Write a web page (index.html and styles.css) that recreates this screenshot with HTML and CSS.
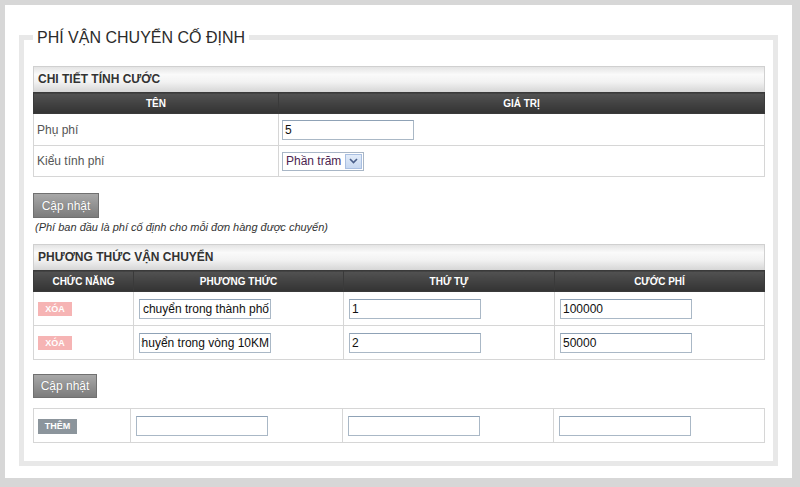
FILE: index.html
```html
<!DOCTYPE html>
<html lang="vi">
<head>
<meta charset="utf-8">
<title>Phí vận chuyển cố định</title>
<link rel="stylesheet" href="styles.css">
</head>
<body>
<div class="page">
  <fieldset class="box">
    <legend class="box-title">PHÍ VẬN CHUYỂN CỐ ĐỊNH</legend>

    <div class="panel">
      <div class="panel-title">CHI TIẾT TÍNH CƯỚC</div>
      <table class="grid grid-fee">
        <colgroup><col class="w-name"><col></colgroup>
        <thead>
          <tr><th>TÊN</th><th>GIÁ TRỊ</th></tr>
        </thead>
        <tbody>
          <tr class="row-a"><td class="label">Phụ phí</td><td><input class="field" type="text" value="5"></td></tr>
          <tr class="row-b"><td class="label">Kiểu tính phí</td><td>
            <div class="select"><span class="select-text">Phần trăm</span><span class="select-btn"><svg width="9" height="6" viewBox="0 0 9 6"><path d="M1 1 L4.5 4.5 L8 1" fill="none" stroke="#4a5f8a" stroke-width="1.6"/></svg></span></div>
          </td></tr>
        </tbody>
      </table>
    </div>

    <button class="btn btn-first" type="button">Cập nhật</button>
    <p class="note">(Phí ban đầu là phí cố định cho mỗi đơn hàng được chuyển)</p>

    <div class="panel">
      <div class="panel-title">PHƯƠNG THỨC VẬN CHUYỂN</div>
      <table class="grid grid-methods">
        <colgroup><col class="w-act"><col class="w-m"><col class="w-o"><col></colgroup>
        <thead>
          <tr><th>CHỨC NĂNG</th><th>PHƯƠNG THỨC</th><th>THỨ TỰ</th><th>CƯỚC PHÍ</th></tr>
        </thead>
        <tbody>
          <tr class="row-m"><td class="cell-tag"><span class="tag tag-del">XÓA</span></td><td><input class="field field-end" type="text" value="Vận chuyển trong thành phố"></td><td><input class="field" type="text" value="1"></td><td><input class="field" type="text" value="100000"></td></tr>
          <tr class="row-m"><td class="cell-tag"><span class="tag tag-del">XÓA</span></td><td><input class="field field-end" type="text" value="Vận chuyển trong vòng 10KM"></td><td><input class="field" type="text" value="2"></td><td><input class="field" type="text" value="50000"></td></tr>
        </tbody>
      </table>
    </div>

    <button class="btn btn-second" type="button">Cập nhật</button>

    <table class="grid grid-add">
      <colgroup><col class="w-act2"><col class="w-m2"><col class="w-o2"><col></colgroup>
      <tbody>
        <tr class="row-m"><td class="cell-tag"><span class="tag tag-add">THÊM</span></td><td><input class="field" type="text" value=""></td><td><input class="field" type="text" value=""></td><td><input class="field" type="text" value=""></td></tr>
      </tbody>
    </table>
  </fieldset>
</div>
</body>
</html>
```

FILE: styles.css
```css
* { box-sizing: border-box; }

html, body {
  margin: 0;
  padding: 0;
  background: #d7d7d7;
  font-family: "Liberation Sans", Arial, sans-serif;
  color: #333;
}

.page {
  background: #fff;
  margin: 5px 8px 0 5px;
  padding: 23px 14px 13px 14px;
  height: 473px;
}

.box {
  margin: 0;
  border: 5px solid #e8e8e8;
  padding: 19px 8px 18px 9px;
  min-width: 0;
}

.box-title {
  font-size: 16px;
  line-height: 19px;
  font-weight: normal;
  color: #2b2b2b;
  padding: 0 4px;
  margin: 0;
}

.panel-title {
  height: 26px;
  border: 1px solid #d0d0d0;
  border-bottom: none;
  background: linear-gradient(#e4e4e4 0%, #fafafa 30%, #f2f2f2 60%, #d6d6d6 100%);
  font-size: 12px;
  font-weight: bold;
  line-height: 25px;
  padding-left: 4px;
  color: #333;
}

.grid {
  width: 100%;
  border-collapse: collapse;
  table-layout: fixed;
}

.grid th {
  height: 21px;
  padding: 0;
  background: linear-gradient(#525252, #333);
  color: #fff;
  font-size: 10px;
  font-weight: bold;
  text-align: center;
  border: 1px solid #3a3a3a;
}

.grid td {
  border: 1px solid #d6d6d6;
  padding: 0 5px;
  vertical-align: middle;
}

.grid-fee td { padding: 0 3px; }
.grid td.cell-tag { padding-left: 4px; }
.row-a td { height: 32px; }
.row-b td { height: 31px; }
.row-m td { height: 34px; }

.w-name { width: 245px; }
.w-act { width: 100px; }
.w-m { width: 210px; }
.w-o { width: 211px; }
.w-act2 { width: 97px; }
.w-m2 { width: 212px; }
.w-o2 { width: 211px; }

.label {
  font-size: 12px;
  color: #555;
}

.field {
  display: block;
  width: 132px;
  height: 20px;
  margin: 0;
  padding: 0 2px;
  border: 1px solid #aab8c6;
  border-top-color: #8fa2b6;
  font-family: "Liberation Sans", Arial, sans-serif;
  font-size: 12px;
  color: #111;
  background: #fff;
  outline: none;
}

.field-end {
  direction: rtl;
  text-align: right;
  padding: 0 1px;
}

.select {
  display: flex;
  align-items: center;
  width: 82px;
  height: 19px;
  border: 1px solid #a8b6c6;
  background: #fff;
  padding: 0 1px 0 3px;
  justify-content: space-between;
}

.select-text {
  font-size: 12px;
  color: #4d2550;
}

.select-btn {
  display: flex;
  align-items: center;
  justify-content: center;
  width: 17px;
  height: 15px;
  border: 1px solid #a9bfe1;
  background: linear-gradient(#e3ecf9, #c7d8f0);
}

.btn {
  display: block;
  width: 66px;
  height: 25px;
  margin: 16px 0 0 0;
  padding: 0;
  border: 1px solid #707070;
  background: linear-gradient(#a8a8a8, #7c7c7c);
  color: #fff;
  font-family: "Liberation Sans", Arial, sans-serif;
  font-size: 12px;
  text-shadow: 0 0 1px #666;
}

.btn-second {
  width: 64px;
  height: 24px;
  margin: 14px 0 10px 0;
}

.note {
  margin: 2px 0 10px 2px;
  font-size: 11px;
  line-height: 14px;
  font-style: italic;
  color: #333;
}

.tag {
  display: inline-block;
  color: #fff;
  font-size: 9px;
  font-weight: bold;
  text-align: center;
  vertical-align: middle;
}

.tag-del {
  width: 34px;
  height: 14px;
  line-height: 14px;
  background: #f6b4b4;
}

.tag-add {
  width: 39px;
  height: 15px;
  line-height: 15px;
  background: #8c959c;
}
```
